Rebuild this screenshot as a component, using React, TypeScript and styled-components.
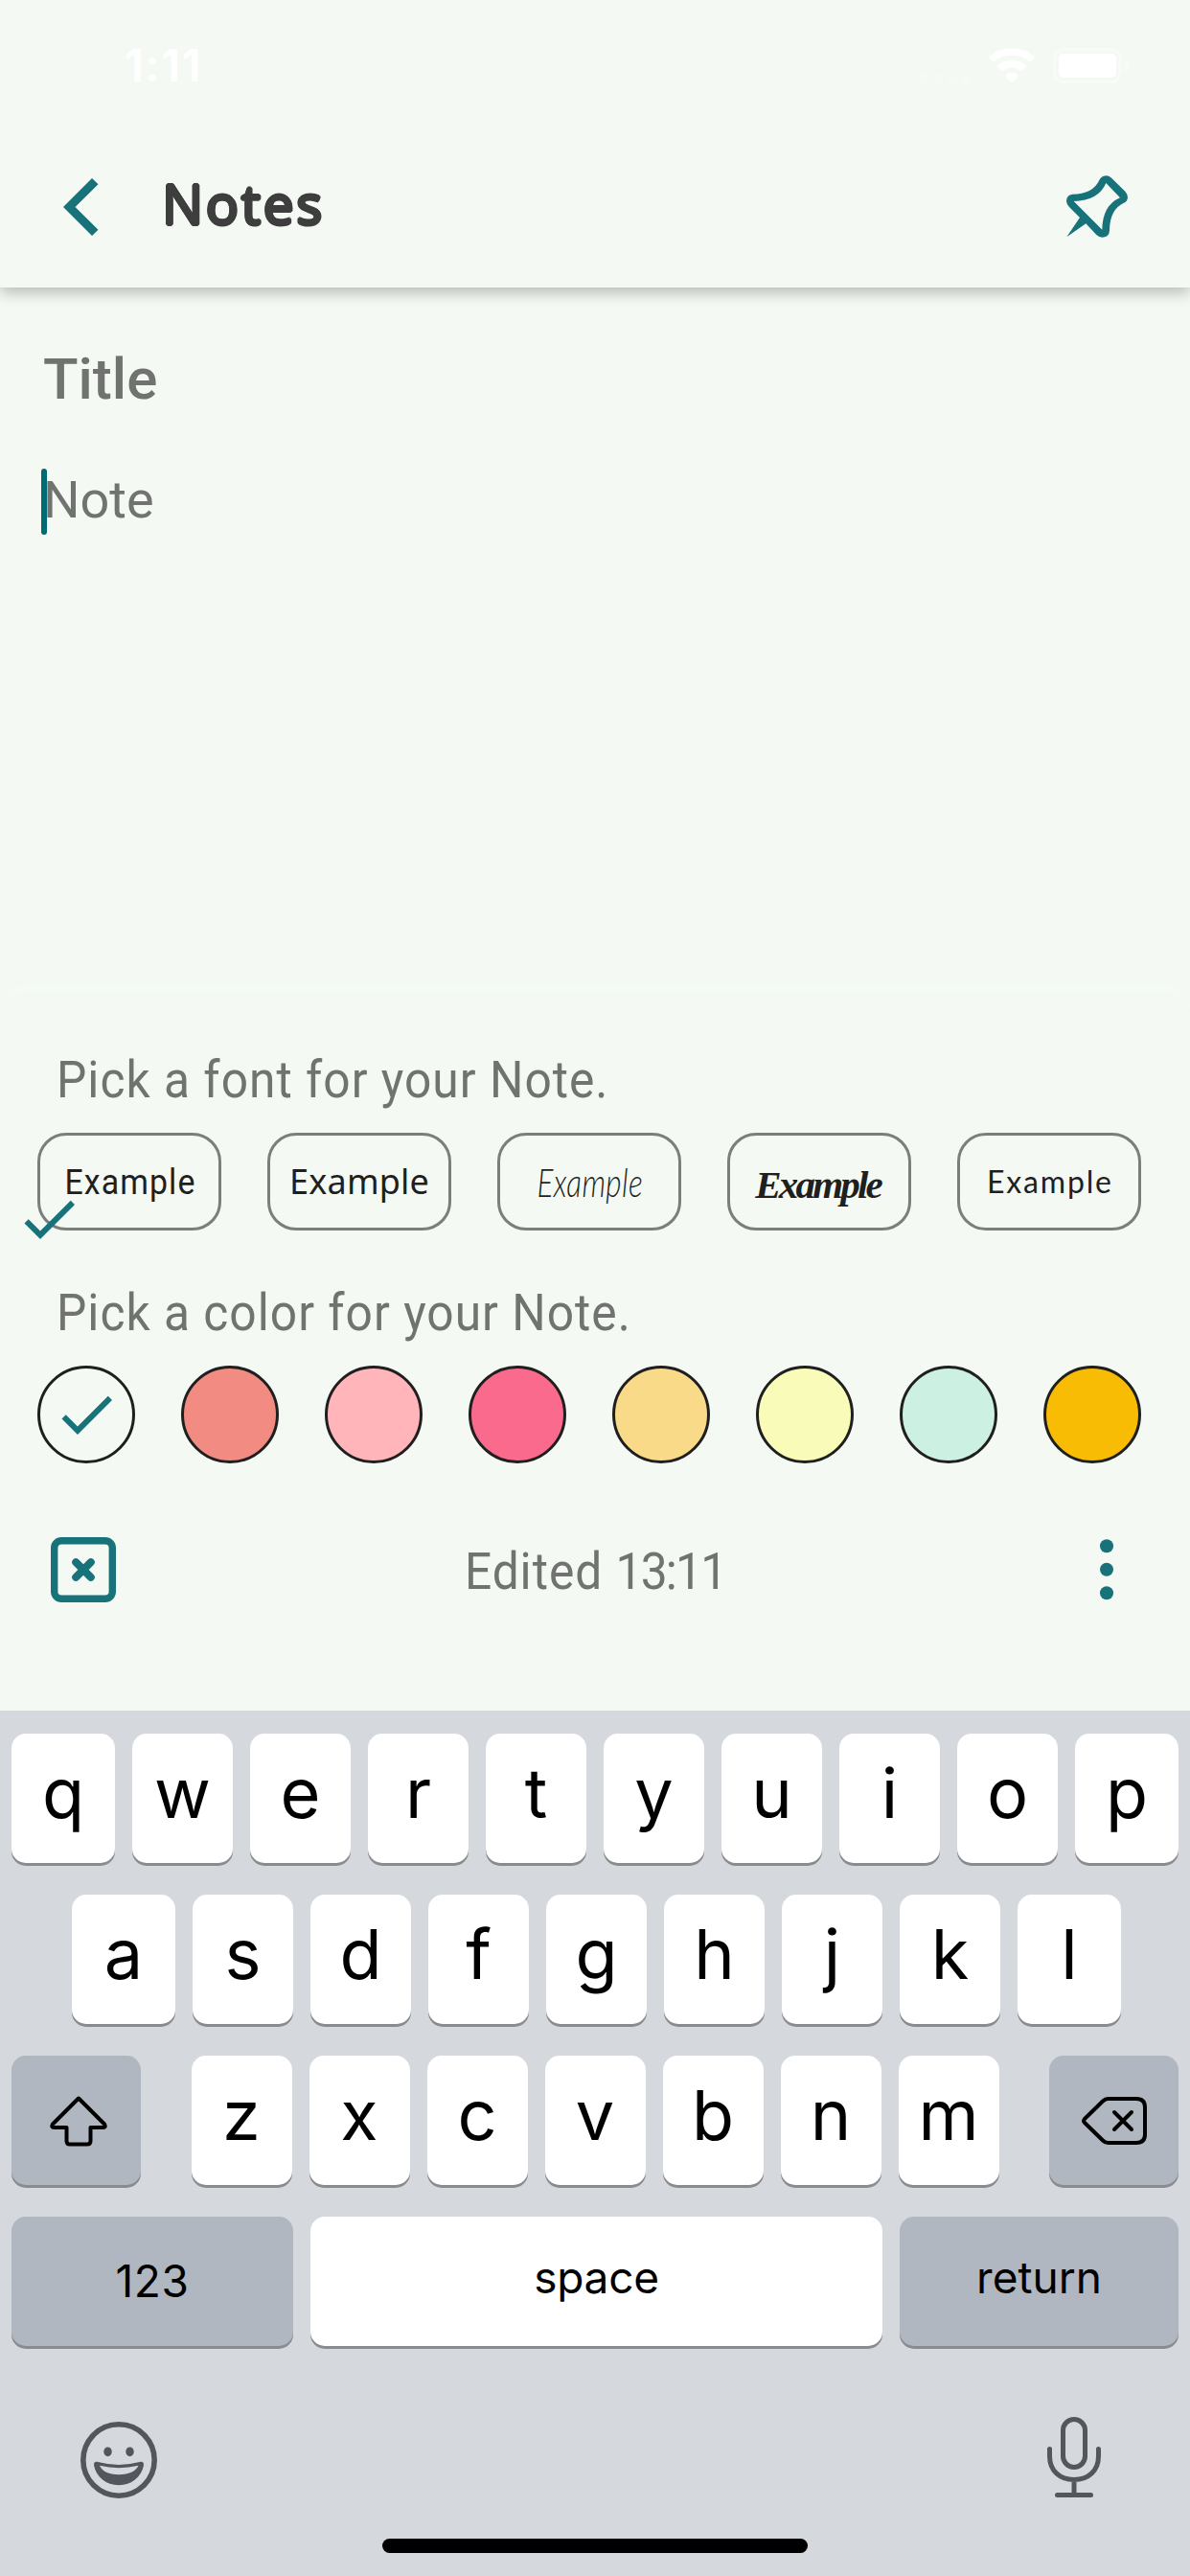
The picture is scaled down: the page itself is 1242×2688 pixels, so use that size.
import React from "react";
import styled, { createGlobalStyle } from "styled-components";

const teal = "#17727a";
const surface = "#f4f9f3";
const muted = "#70736f";
const ink = "#3e3e3e";

const GlobalStyle = createGlobalStyle`
  * { box-sizing: border-box; }
  body { margin: 0; background: ${surface}; }
`;

const Screen = styled.div`
  width: 1242px;
  height: 2688px;
  display: flex;
  flex-direction: column;
  overflow: hidden;
  background: ${surface};
  font-family: Roboto, "Liberation Sans", sans-serif;
`;

const TopBar = styled.header`
  height: 300px;
  flex: none;
  background: ${surface};
  box-shadow: 0 5px 15px rgba(0, 0, 0, 0.26);
`;

const StatusBar = styled.div`
  height: 136px;
  padding: 0 64px 0 130px;
  display: flex;
  align-items: center;
  justify-content: space-between;
`;

const Clock = styled.span`
  color: #fff;
  font: 600 47px/60px Inter, sans-serif;
  letter-spacing: 1.7px;
`;

const StatusIcons = styled.div`
  display: flex;
  align-items: center;
  gap: 19px;
`;

const TitleRow = styled.div`
  height: 160px;
  padding: 0 65px 1px 66px;
  display: flex;
  align-items: center;
`;

/* The ring of shadows thickens the strokes and rounds off their ends. */
const Heading = styled.h1`
  flex: 1;
  margin: 0 0 0 66px;
  padding-bottom: 8px;
  color: ${ink};
  font: 400 57px/80px "Noto Sans", sans-serif;
  letter-spacing: 2.4px;
  text-shadow:
    1.6px 0 ${ink}, -1.6px 0 ${ink}, 0 1.6px ${ink}, 0 -1.6px ${ink},
    1.1px 1.1px ${ink}, -1.1px 1.1px ${ink}, 1.1px -1.1px ${ink}, -1.1px -1.1px ${ink};
`;

const Editor = styled.main`
  height: 728px;
  flex: none;
  padding: 60px 45px 0;
`;

const TitleField = styled.div`
  color: ${muted};
  font-size: 60px;
  font-weight: 500;
  line-height: 72px;
`;

const NoteField = styled.div`
  position: relative;
  margin-top: 55px;
  color: ${muted};
  font-size: 54px;
  line-height: 69px;
`;

const Caret = styled.i`
  position: absolute;
  left: -2px;
  top: 2px;
  width: 6px;
  height: 69px;
  border-radius: 3px;
  background: #006b75;
`;

const OptionsPanel = styled.section`
  height: 757px;
  flex: none;
  padding: 60px 51px 0 39px;
  border-top: 7px solid #f4fbf7;
  border-radius: 26px 26px 0 0;
`;

const Label = styled.p<{ $gap?: number }>`
  margin: ${(p) => p.$gap ?? 0}px 0 0 20px;
  color: ${muted};
  font-size: 54px;
  line-height: 64px;
  letter-spacing: 1.1px;
  white-space: nowrap;
  transform: scaleX(0.92);
  transform-origin: left;
`;

const FontList = styled.div`
  margin-top: 23px;
  display: flex;
  gap: 48px;
`;

const FontChip = styled.button`
  position: relative;
  width: 192px;
  height: 102px;
  padding: 0;
  display: flex;
  align-items: center;
  justify-content: center;
  border: 3px solid #7b7e7a;
  border-radius: 30px;
  background: none;
  color: #1f1f1f;
`;

const Sample = styled.span<{ $font: string; $spacing: number; $squeeze?: number; $drop?: number }>`
  font: ${(p) => p.$font};
  letter-spacing: ${(p) => p.$spacing}px;
  margin-right: ${(p) => -p.$spacing}px;
  padding-top: ${(p) => p.$drop ?? 0}px;
  transform: scaleX(${(p) => p.$squeeze ?? 1});
  white-space: nowrap;
`;

const ChipCheck = styled.span`
  position: absolute;
  left: -27px;
  top: 51px;
  width: 72px;
  height: 72px;
`;

const ColorList = styled.div`
  margin-top: 23px;
  display: flex;
  gap: 48px;
`;

const Swatch = styled.button<{ $color: string }>`
  width: 102px;
  height: 102px;
  padding: 0;
  display: flex;
  align-items: center;
  justify-content: center;
  border: 3px solid #1f1f1f;
  border-radius: 50%;
  background: ${(p) => p.$color};
`;

const PanelFooter = styled.footer`
  margin: 75px 26px 0 14px;
  height: 72px;
  display: flex;
  align-items: center;
  justify-content: space-between;
`;

const Edited = styled.span`
  color: ${muted};
  font-size: 54px;
  line-height: 64px;
  letter-spacing: 1.05px;
  padding: 3px 26px 0 0;
  transform: scaleX(0.92);
`;

const Time = styled.span`
  letter-spacing: -1.9px;
`;

const Keyboard = styled.section`
  height: 903px;
  flex: none;
  padding-top: 24px;
  background: #d5d8dd;
  display: flex;
  flex-direction: column;
  gap: 33px;
`;

const KeyRow = styled.div<{ $inset: number; $right?: number }>`
  display: flex;
  justify-content: space-between;
  padding: 0 ${(p) => p.$right ?? p.$inset}px 0 ${(p) => p.$inset}px;
`;

const KeyGroup = styled.div`
  display: flex;
  gap: 18px;
`;

const Key = styled.button<{ $width?: number; $dark?: boolean; $size?: number; $lift?: number; $spacing?: number }>`
  width: ${(p) => p.$width ?? 105}px;
  height: 135px;
  flex: none;
  padding: 0 0 ${(p) => p.$lift ?? 13}px;
  display: flex;
  align-items: center;
  justify-content: center;
  border: 0;
  border-radius: 15px;
  background: ${(p) => (p.$dark ? "#b1b7c1" : "#fff")};
  box-shadow: 0 3px 0 #898b8f;
  color: #000;
  font-family: Inter, sans-serif;
  font-size: ${(p) => p.$size ?? 72}px;
  font-weight: ${(p) => (p.$size ? 400 : 380)};
  letter-spacing: ${(p) => p.$spacing ?? 0}px;
`;

const KeyboardTools = styled.div`
  margin-top: 41px;
  padding: 0 91px 0 84px;
  display: flex;
  align-items: flex-end;
  justify-content: space-between;
`;

const HomeIndicator = styled.div`
  width: 444px;
  height: 15px;
  margin: 9px auto 0;
  border-radius: 8px;
  background: #000;
`;

const Glyph = styled.svg`
  display: block;
  flex: none;
`;

const CheckIcon = () => (
  <Glyph width="72" height="72" viewBox="0 0 24 24" fill={teal}>
    <path d="M21 7L9 19l-5.5-5.5 1.41-1.41L9 16.17 19.59 5.59z" />
  </Glyph>
);

const SignalIcon = () => (
  <Glyph width="55" height="37" viewBox="0 0 55 37" fill="#f5faf6">
    {[0, 15, 30, 45].map((x) => (
      <rect key={x} x={x} y="26" width="10" height="10" rx="3" />
    ))}
  </Glyph>
);

const WifiIcon = () => (
  <Glyph width="48" height="36" viewBox="395 148 144 108" fill="none" stroke="#fff">
    <path d="M402 185A97 97 0 0 1 532 185" strokeWidth="22" />
    <path d="M427.500 213A59 59 0 0 1 506.500 213" strokeWidth="23" />
    <path d="M467 256L446 235Q467 212 488 235Z" fill="#fff" stroke="none" />
  </Glyph>
);

const BatteryIcon = () => (
  <Glyph width="79" height="37" viewBox="0 0 79 37">
    <rect x="1.500" y="1.500" width="69" height="34" rx="10" fill="none" stroke="#f8fbf8" strokeWidth="3" />
    <rect x="6" y="6" width="60" height="25" rx="5" fill="#fff" />
    <path d="M74.500 12Q79 14 79 18.500T74.500 25Z" fill="#f8fbf8" />
  </Glyph>
);

const BackIcon = () => (
  <Glyph width="37" height="60" viewBox="0 0 37 60" fill={teal}>
    <path d="M30 0L36.500 6.200 12.500 30 36.500 53.800 30 60 0 30Z" />
  </Glyph>
);

const PinIcon = () => (
  <Glyph width="64" height="65" viewBox="639 547 192 195" fill={teal} fillRule="evenodd">
    <path d="M745 557Q752 548 763 548 772 548 780 555L823 597Q831 606 831 617 829 629 822 632 774 653 774 720 773 739 752 741 741 741 733 733L700 698 640 740 681 679 648 646Q639 637 639 627 640 608 658 606 722 606 742 562ZM763 571Q740 626 662 628L751 717Q752 641 807 617Z" />
  </Glyph>
);

const CloseBoxIcon = () => (
  <Glyph width="68" height="68" viewBox="0 0 68 68" fill="none" stroke={teal} strokeLinecap="round">
    <rect x="3.700" y="3.700" width="60.600" height="60.600" rx="7.500" strokeWidth="7.400" />
    <path d="M26.200 26.200l15.600 15.600M41.800 26.200L26.200 41.800" strokeWidth="8" />
  </Glyph>
);

const MoreIcon = () => (
  <Glyph width="20" height="68" viewBox="0 0 20 68" fill={teal}>
    <circle cx="10" cy="9.300" r="7" />
    <circle cx="10" cy="33.800" r="7" />
    <circle cx="10" cy="58.200" r="7" />
  </Glyph>
);

const ShiftIcon = () => (
  <Glyph width="64" height="56" viewBox="0 0 64 56" fill="none" stroke="#000" strokeWidth="4" strokeLinejoin="round">
    <path d="M34 4.500L7 31.500Q5 35 8.500 35H21.500V49Q21.500 52.500 25 52.500H43Q46.500 52.500 46.500 49V35H59.500Q63 35 61 31.500Z" />
  </Glyph>
);

const BackspaceIcon = () => (
  <Glyph width="68" height="50" viewBox="0 0 68 50" fill="none" stroke="#000" strokeWidth="4" strokeLinejoin="round" strokeLinecap="round">
    <path d="M27.500 2H57Q66 2 66 11V39Q66 48 57 48H27.500Q24.500 48 22 45.500L3 27Q1.200 25 3 23L22 4.500Q24.500 2 27.500 2Z" />
    <path d="M34 16l18 18M52 16L34 34" />
  </Glyph>
);

const EmojiIcon = () => (
  <Glyph width="80" height="80" viewBox="0 0 80 80" fill="#53575d">
    <circle cx="40" cy="40" r="37.200" fill="none" stroke="#53575d" strokeWidth="5.600" />
    <ellipse cx="28.500" cy="31.300" rx="4.200" ry="4.900" />
    <ellipse cx="51.500" cy="31.300" rx="4.200" ry="4.900" />
    <path
      fillRule="evenodd"
      d="M17 41.800Q40 48 63 41.800 66.200 41.500 66 45.500C63.500 58 53 66.200 40 66.200S16.500 58 14 45.500Q13.800 41.500 17 41.800ZM20 45.800Q24 55.200 40 55.200T60.500 45.800Q40 50.500 20 45.800Z"
    />
  </Glyph>
);

const MicIcon = () => (
  <Glyph width="60" height="85" viewBox="0 0 60 85" fill="none" stroke="#53575d" strokeWidth="5" strokeLinecap="round">
    <rect x="18.500" y="2.500" width="23" height="50" rx="11.500" />
    <path d="M4.500 33.500V41C4.500 56 15 65.500 30 65.500S55.500 56 55.500 41V33.500M30 65.500V81M12.500 81.500H47.500" />
  </Glyph>
);

const fontSamples = [
  { font: '400 36px/44px Roboto, sans-serif', spacing: 1.2, squeeze: 0.94, drop: 1 },
  { font: '400 36px/44px "Noto Sans", sans-serif', spacing: 0.2 },
  { font: 'italic 300 42px/44px Lato, sans-serif', spacing: 0.5, squeeze: 0.75 },
  { font: 'italic 700 41px/44px "Liberation Serif", serif', spacing: -2.8, drop: 5 },
  { font: '400 32px/44px Lato, sans-serif', spacing: 1.8 },
];

const colors = [surface, "#f28b82", "#ffb5b9", "#fa6a8c", "#f8da88", "#f9fbb9", "#ccf0e2", "#f8bc05"];

export default function App() {
  return (
    <>
      <GlobalStyle />
      <Screen>
        <TopBar>
          <StatusBar>
            <Clock>1:11</Clock>
            <StatusIcons>
              <SignalIcon />
              <WifiIcon />
              <BatteryIcon />
            </StatusIcons>
          </StatusBar>
          <TitleRow>
            <BackIcon />
            <Heading>Notes</Heading>
            <PinIcon />
          </TitleRow>
        </TopBar>

        <Editor>
          <TitleField>Title</TitleField>
          <NoteField>
            Note
            <Caret />
          </NoteField>
        </Editor>

        <OptionsPanel>
          <Label>Pick a font for your Note.</Label>
          <FontList>
            {fontSamples.map((s, i) => (
              <FontChip key={i}>
                <Sample $font={s.font} $spacing={s.spacing} $squeeze={s.squeeze} $drop={s.drop}>
                  Example
                </Sample>
                {i === 0 && (
                  <ChipCheck>
                    <CheckIcon />
                  </ChipCheck>
                )}
              </FontChip>
            ))}
          </FontList>
          <Label $gap={54}>Pick a color for your Note.</Label>
          <ColorList>
            {colors.map((c, i) => (
              <Swatch key={c} $color={c}>
                {i === 0 && <CheckIcon />}
              </Swatch>
            ))}
          </ColorList>
          <PanelFooter>
            <CloseBoxIcon />
            <Edited>
              Edited <Time>13:11</Time>
            </Edited>
            <MoreIcon />
          </PanelFooter>
        </OptionsPanel>

        <Keyboard>
          <KeyRow $inset={12}>
            {[..."qwertyuiop"].map((k) => (
              <Key key={k} $width={k === "q" || k === "p" ? 108 : 105}>{k}</Key>
            ))}
          </KeyRow>
          <KeyRow $inset={75} $right={72}>
            {[..."asdfghjkl"].map((k) => (
              <Key key={k} $width={k === "a" || k === "l" ? 108 : 105}>{k}</Key>
            ))}
          </KeyRow>
          <KeyRow $inset={12}>
            <Key $width={135} $dark $lift={0}>
              <ShiftIcon />
            </Key>
            <KeyGroup>
              {[..."zxcvbnm"].map((k) => (
                <Key key={k}>{k}</Key>
              ))}
            </KeyGroup>
            <Key $width={135} $dark $lift={0}>
              <BackspaceIcon />
            </Key>
          </KeyRow>
          <KeyRow $inset={12}>
            <Key $width={294} $dark $size={46} $lift={2} $spacing={0.6}>123</Key>
            <Key $width={597} $size={46} $lift={10} $spacing={-0.3}>space</Key>
            <Key $width={291} $dark $size={46} $lift={10}>return</Key>
          </KeyRow>
          <KeyboardTools>
            <EmojiIcon />
            <MicIcon />
          </KeyboardTools>
          <HomeIndicator />
        </Keyboard>
      </Screen>
    </>
  );
}
